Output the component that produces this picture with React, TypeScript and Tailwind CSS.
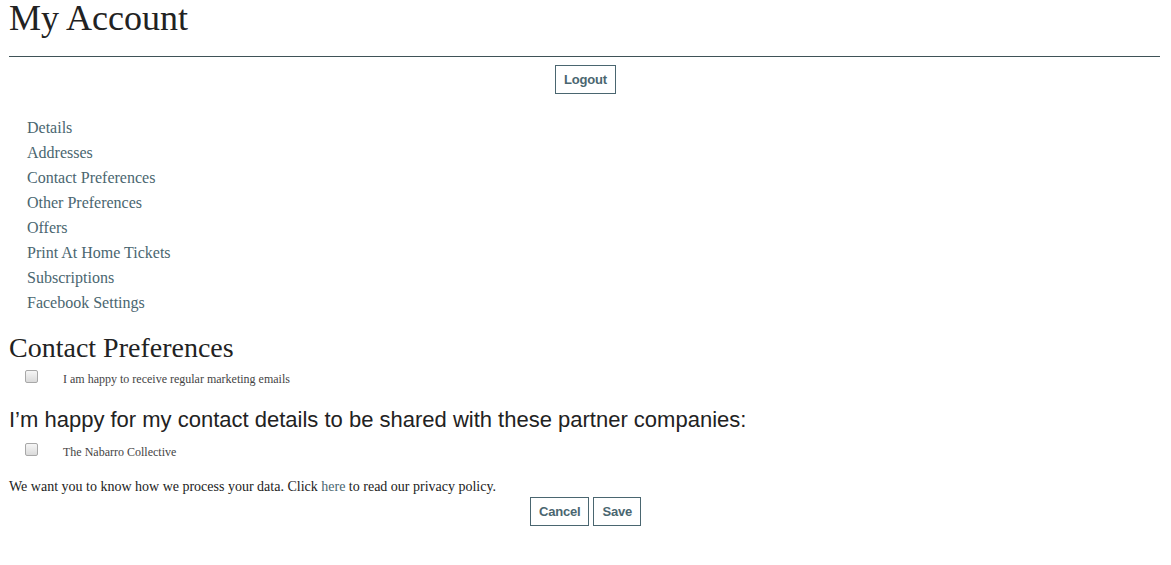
import React, { useState } from 'react';

const navLinks = [
  'Details',
  'Addresses',
  'Contact Preferences',
  'Other Preferences',
  'Offers',
  'Print At Home Tickets',
  'Subscriptions',
  'Facebook Settings',
];

const serif = "font-['Liberation_Serif','Times_New_Roman',serif]";
const sans = "font-['Liberation_Sans',Arial,sans-serif]";

const OutlineButton = ({ label }: { label: string }) => (
  <button
    className={`${sans} h-[29px] px-[8px] border border-[#4a6670] bg-white text-[13px] font-bold text-[#4a6670] leading-none tracking-[-0.2px]`}
  >
    {label}
  </button>
);

const Check = ({ checked, onChange, className }: { checked: boolean; onChange: () => void; className: string }) => (
  <input
    type="checkbox"
    checked={checked}
    onChange={onChange}
    className={`appearance-none shrink-0 w-[13px] h-[13px] m-0 rounded-[2px] border border-[#a8a8a8] bg-linear-to-b from-[#f6f6f6] to-[#dadada] checked:bg-[#4a6670] ${className}`}
  />
);

export default function App() {
  const [marketing, setMarketing] = useState(false);
  const [nabarro, setNabarro] = useState(false);

  return (
    <div className={`${serif} w-[1171px] min-h-[565px] bg-white px-[9px] text-[#222]`}>
      <h1 className="text-[36px] h-[36px] leading-[36px] mb-[20px]">My Account</h1>
      <hr className="border-0 border-t border-[#3f5257] mr-[2px]" />

      <div className="flex justify-center pt-[8px]">
        <OutlineButton label="Logout" />
      </div>

      <ul className="pl-[18px] pt-[21px] flex flex-col">
        {navLinks.map((l) => (
          <li key={l} className="h-[25px] leading-[25px] text-[16px] text-[#4a6670]">
            <a href="#">{l}</a>
          </li>
        ))}
      </ul>

      <h2 className="text-[28px] leading-[32px] pt-[17px]">Contact Preferences</h2>
      <label className="flex items-start h-[24px] pl-[16px]">
        <Check checked={marketing} onChange={() => setMarketing(!marketing)} className="mt-[6px]" />
        <span className="ml-[25px] mt-[8px] text-[12px] leading-[14px] text-[#444]">
          I am happy to receive regular marketing emails
        </span>
      </label>

      <h3 className={`${sans} text-[22px] leading-[26px] pt-[19px] text-[#222]`}>
        I’m happy for my contact details to be shared with these partner companies:
      </h3>
      <label className="flex items-start h-[26px] pl-[16px]">
        <Check checked={nabarro} onChange={() => setNabarro(!nabarro)} className="mt-[10px]" />
        <span className="ml-[25px] mt-[12px] text-[12px] leading-[14px] text-[#444]">The Nabarro Collective</span>
      </label>

      <p className="text-[14px] leading-[18px] pt-[19px]">
        We want you to know how we process your data. Click{' '}
        <a href="#" className="text-[#4a6670]">here</a> to read our privacy policy.
      </p>
      <div className="flex justify-center gap-[4px] pt-[1px]">
        <OutlineButton label="Cancel" />
        <OutlineButton label="Save" />
      </div>
    </div>
  );
}
